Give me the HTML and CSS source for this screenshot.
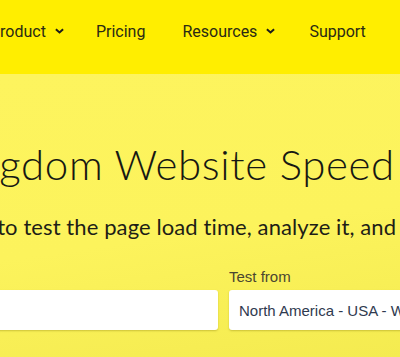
FILE: index.html
```html
<!DOCTYPE html>
<html lang="en">

<head>
    <meta charset="UTF-8">
    <meta name="viewport" content="width=device-width, initial-scale=1.0">
    <title>Pingdom Website Speed Test</title>
    <link rel="stylesheet" href="styles.css">
</head>

<body>
    <header id="top-bar">
        <nav id="nav">
            <a class="nav-item" href="#">Product
                <svg class="chevron" viewBox="0 0 10 6" width="9" height="6"><path d="M1 1 L5 4.6 L9 1" fill="none" stroke="#1b1b1b" stroke-width="2.2"/></svg>
            </a>
            <a class="nav-item" href="#">Pricing</a>
            <a class="nav-item" href="#">Resources
                <svg class="chevron" viewBox="0 0 10 6" width="9" height="6"><path d="M1 1 L5 4.6 L9 1" fill="none" stroke="#1b1b1b" stroke-width="2.2"/></svg>
            </a>
            <a class="nav-item" href="#">Support</a>
        </nav>
    </header>

    <section id="hero">
        <h1 class="title">Pingdom Website Speed Test</h1>
        <p class="lead">Enter a URL to test the page load time, analyze it, and find bottlenecks.</p>

        <form id="test-form">
            <div class="field field-url">
                <label class="label">URL</label>
                <input class="box" type="text" value="">
            </div>
            <div class="field field-from">
                <label class="label">Test from</label>
                <div class="box select">North America - USA - Washington D.C</div>
            </div>
        </form>
    </section>
</body>

</html>
```

FILE: styles.css
```css
* {
    margin: 0;
    padding: 0;
    box-sizing: border-box;
}

html,
body {
    height: 100%;
    overflow: hidden;
}

body {
    background: #f6ed53;
    font-family: "Liberation Sans", Arial, sans-serif;
}

#top-bar {
    height: 74px;
    background-color: #ffee00;
    display: flex;
    align-items: center;
    padding-bottom: 12px;
}

#nav {
    display: flex;
    align-items: center;
    margin-left: -10px;
    white-space: nowrap;
}

.nav-item {
    font-family: Roboto, sans-serif;
    font-size: 16px;
    color: #2a2a14;
    text-decoration: none;
    margin-right: 34px;
    display: flex;
    align-items: center;
}

.nav-item:first-child {
    margin-right: 32px;
}

.nav-item:nth-child(2) {
    margin-right: 37px;
}

.chevron {
    margin-left: 9px;
}

#hero {
    height: calc(100% - 74px);
    background: linear-gradient(172deg, #fdf45e 0%, #fcf35c 55%, #f4eb50 100%);
    padding-top: 62px;
    white-space: nowrap;
}

.title {
    font-family: Lato, sans-serif;
    font-weight: 300;
    font-size: 42px;
    line-height: 56px;
    color: #161812;
    margin-left: -59px;
    letter-spacing: 0.6px;
}

.lead {
    font-family: Lato, sans-serif;
    font-size: 22px;
    line-height: 28px;
    letter-spacing: 0.1px;
    color: #1e1e16;
    margin-top: 21px;
    margin-left: -124px;
}

#test-form {
    display: flex;
    gap: 11px;
    margin-top: 27px;
    margin-left: -189px;
}

.field {
    display: flex;
    flex-direction: column;
    flex-shrink: 0;
}

.field-url {
    width: 407px;
}

.field-from {
    width: 360px;
}

.label {
    font-size: 15px;
    color: #4a4630;
    line-height: 18px;
    margin-bottom: 4px;
}

.field-url .label {
    visibility: hidden;
}

.box {
    height: 40px;
    background: #fff;
    border: none;
    border-radius: 3px;
    box-shadow: 0 1px 2px rgba(120, 110, 0, .35);
    padding: 0 10px;
    font-size: 15px;
    font-family: "Liberation Sans", Arial, sans-serif;
    color: #2f3a4f;
}

.select {
    display: flex;
    align-items: center;
}
```
